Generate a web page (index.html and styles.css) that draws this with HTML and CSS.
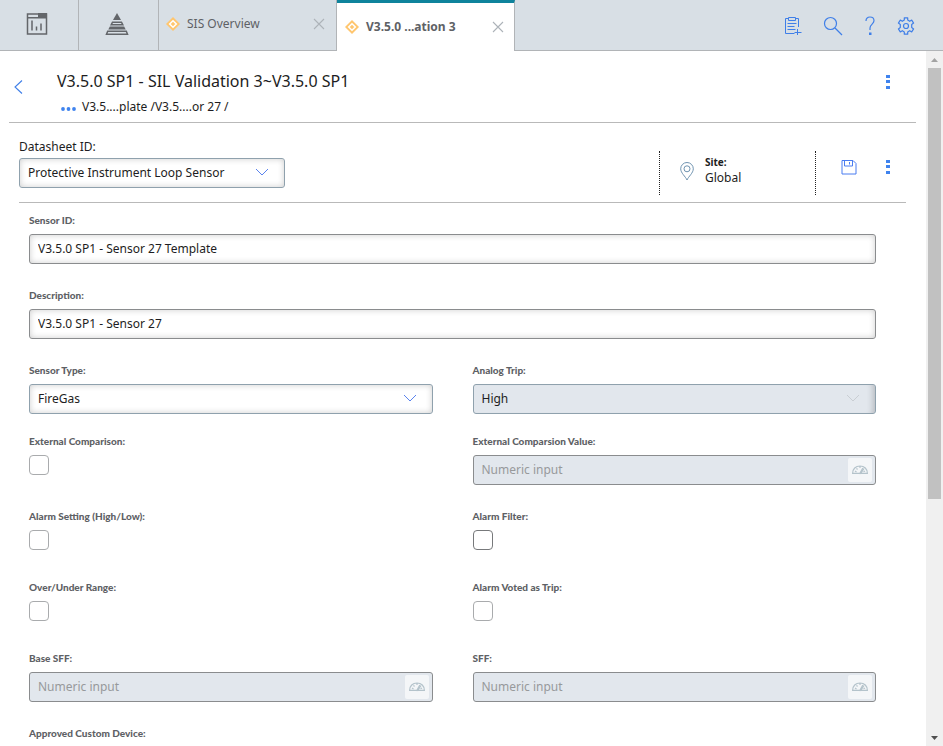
FILE: index.html
```html
<!DOCTYPE html>
<html lang="en">
<head>
<meta charset="utf-8">
<title>SIS Datasheet</title>
<link rel="stylesheet" href="styles.css">
</head>
<body>
<svg class="defs" width="0" height="0" aria-hidden="true">
  <symbol id="diamond" viewBox="0 0 14 14"><path fill="#ffc66e" d="M7 0l7 7-7 7-7-7z"/><path fill="none" stroke="#fff" stroke-width="1.5" d="M7 3.7L10.300 7 7 10.300 3.700 7z"/></symbol>
  <symbol id="close" viewBox="0 0 12 12"><path fill="none" stroke="currentColor" stroke-width="1.1" d="M1 1l10 10M11 1L1 11"/></symbol>
  <symbol id="chevron" viewBox="0 0 14 8"><path fill="none" stroke="currentColor" d="M1 1l6 6 6-6"/></symbol>
  <symbol id="more" viewBox="0 0 4 16"><path fill="#3f83ee" d="M0 1h4v3H0zM0 6h4v3H0zM0 12h4v3H0z"/></symbol>
  <symbol id="gauge" viewBox="0 0 16 10"><path fill="none" stroke="#b4c3cb" stroke-width="1.2" d="M.6 8.400C.6 4 3.700 1 8 1s7.400 3 7.400 7.400zM3 6l1.500 1M4.500 3.300l1 1.200M8 1.500V3M13 6l-1.500.8M10.800 3L7.500 9M12 3.500L8.500 9"/></symbol>
</svg>

<header class="topbar">
  <nav class="tabs" aria-label="Open pages">
    <a class="tab tab-icon" href="#dashboard" aria-label="Dashboard">
      <svg width="22" height="22" viewBox="0 0 22 22"><path fill="none" stroke="#63666a" stroke-width="1.500" d="M1.500 1h19v20h-19z"/><path fill="#63666a" d="M12 0h9v5h-9zM1 4h20v1.500H1z"/><path stroke="#63666a" stroke-width="1.500" d="M6 7.500v10M10.500 13.500v4M15 10.500v7"/></svg>
    </a>
    <a class="tab tab-icon" href="#hierarchy" aria-label="Hierarchy">
      <svg width="24" height="22" viewBox="0 0 24 22"><path fill="#63666a" d="M12 0l4 7H8z"/><path fill="none" stroke="#63666a" stroke-width="1.500" d="M7.500 9.200h9l1.300 2.600H6.200zM5.300 14.200h13.400l.8 1.600H4.500zM2.700 18.200h18.600l1.200 3h-21z"/></svg>
    </a>
    <div class="tab">
      <svg width="14" height="14"><use href="#diamond"/></svg>
      <a class="tab-name" href="#overview">SIS Overview</a>
      <button class="icon-btn close" aria-label="Close SIS Overview"><svg width="12" height="12"><use href="#close"/></svg></button>
    </div>
    <div class="tab active">
      <svg width="14" height="14"><use href="#diamond"/></svg>
      <a class="tab-name" href="#validation" aria-current="page">V3.5.0 ...ation 3</a>
      <button class="icon-btn close" aria-label="Close V3.5.0 validation"><svg width="12" height="12"><use href="#close"/></svg></button>
    </div>
  </nav>
  <div class="tools">
    <button class="icon-btn" aria-label="New record"><svg width="18" height="20" viewBox="0 0 18 20"><g fill="none" stroke="#3f7fe8"><path d="M4 2.500H1.500v15h9M12 2.500h2.500V11M4.500 1.500h7v3h-7zM3.500 7.500h9M3.500 10.500h7M3.500 13.500h8M10.500 16.500h7M13.500 13v6"/></g></svg></button>
    <button class="icon-btn" aria-label="Search"><svg width="20" height="20" viewBox="0 0 20 20"><g fill="none" stroke="#3f7fe8" stroke-width="1.200"><circle cx="7.500" cy="7.500" r="6"/><path d="M12 12l7 7"/></g></svg></button>
    <button class="icon-btn" aria-label="Help"><svg width="12" height="20" viewBox="0 0 12 20"><path fill="none" stroke="#3f7fe8" stroke-width="1.200" d="M2 5c0-2.500 1.500-4 4-4s4 1.500 4 3.800c0 3-4 3.700-4 7.200v2"/><path fill="#3f7fe8" d="M5 16.500h2.500V19H5z"/></svg></button>
    <button class="icon-btn" aria-label="Settings"><svg width="18" height="18" viewBox="0 0 18 18"><g fill="none" stroke="#3f7fe8" stroke-width="1.200" stroke-linejoin="round"><circle cx="9" cy="9" r="2.500"/><path d="M7.300.8h3.400v2.300l2 1.200 2-1.200 1.900 3-1.900 1.300v3.200l1.900 1.300-1.900 3-2-1.200-2 1.200v2.300H7.300v-2.300l-2-1.200-2 1.200-1.900-3 1.900-1.300V7.400L1.400 6.100l1.900-3 2 1.200 2-1.200z"/></g></svg></button>
  </div>
</header>

<div class="workspace">
  <main class="page">
    <section class="record-head">
      <button class="icon-btn back" aria-label="Back"><svg width="9" height="14" viewBox="0 0 9 14"><path fill="none" stroke="#3f7fe8" stroke-width="1.100" d="M8 .5L1 7l7 6.500"/></svg></button>
      <div class="record-text">
        <h1>V3.5.0 SP1 - SIL Validation 3~V3.5.0 SP1</h1>
        <nav class="crumbs" aria-label="Breadcrumb">
          <button class="icon-btn" aria-label="Show full path"><svg width="15" height="4" viewBox="0 0 15 4"><g fill="#3f83ee"><circle cx="2" cy="2" r="1.900"/><circle cx="7.500" cy="2" r="1.900"/><circle cx="13" cy="2" r="1.900"/></g></svg></button>
          <span><a href="#template">V3.5....plate</a> /<a href="#sensor">V3.5....or 27</a> /</span>
        </nav>
      </div>
      <button class="icon-btn more" aria-label="Record actions"><svg width="4" height="16"><use href="#more"/></svg></button>
    </section>

    <section class="sheet-bar">
      <div class="sheet-pick">
        <label for="sheet">Datasheet ID:</label>
        <div class="select">
          <select id="sheet"><option>Protective Instrument Loop Sensor</option></select>
          <svg width="14" height="8"><use href="#chevron"/></svg>
        </div>
      </div>
      <div class="site">
        <svg width="14" height="19" viewBox="0 0 14 19"><g fill="none" stroke="#6f93b0"><path d="M7 18C5.500 14.500.7 11 .7 6.800a6.300 6.300 0 0 1 12.600 0C13.300 11 8.500 14.500 7 18z"/><circle cx="7" cy="6.800" r="3"/></g></svg>
        <div><strong>Site:</strong><span>Global</span></div>
      </div>
      <div class="sheet-actions">
        <button class="icon-btn" aria-label="Save"><svg width="16" height="16" viewBox="0 0 16 16"><path fill="none" stroke="#4a7cf0" d="M1 1.500h11l3 3V15H1zM3.500 1.500V7h8V1.500M8.500 3v2.500"/></svg></button>
        <button class="icon-btn" aria-label="Datasheet actions"><svg width="4" height="16"><use href="#more"/></svg></button>
      </div>
    </section>

    <form class="form">
      <div class="field wide"><label for="sid">Sensor ID:</label><input class="box" id="sid" type="text" value="V3.5.0 SP1 - Sensor 27 Template"></div>
      <div class="field wide"><label for="desc">Description:</label><input class="box" id="desc" type="text" value="V3.5.0 SP1 - Sensor 27"></div>

      <div class="field short"><label for="type">Sensor Type:</label>
        <div class="select"><select id="type"><option>FireGas</option></select><svg width="14" height="8"><use href="#chevron"/></svg></div></div>
      <div class="field short"><label for="trip">Analog Trip:</label>
        <div class="select off"><select id="trip" disabled><option>High</option></select><svg width="14" height="8"><use href="#chevron"/></svg></div></div>

      <div class="field"><label for="cmp">External Comparison:</label><input class="check" id="cmp" type="checkbox"></div>
      <div class="field"><label for="cmpv">External Comparsion Value:</label>
        <div class="numeric"><input class="box" id="cmpv" type="text" placeholder="Numeric input" disabled><span class="unit"><svg width="16" height="10"><use href="#gauge"/></svg></span></div></div>

      <div class="field short"><label for="alarm">Alarm Setting (High/Low):</label><input class="check" id="alarm" type="checkbox"></div>
      <div class="field short"><label for="filter">Alarm Filter:</label><input class="check strong" id="filter" type="checkbox"></div>

      <div class="field short"><label for="range">Over/Under Range:</label><input class="check" id="range" type="checkbox"></div>
      <div class="field short"><label for="voted">Alarm Voted as Trip:</label><input class="check" id="voted" type="checkbox"></div>

      <div class="field"><label for="bsff">Base SFF:</label>
        <div class="numeric"><input class="box" id="bsff" type="text" placeholder="Numeric input" disabled><span class="unit"><svg width="16" height="10"><use href="#gauge"/></svg></span></div></div>
      <div class="field"><label for="sff">SFF:</label>
        <div class="numeric"><input class="box" id="sff" type="text" placeholder="Numeric input" disabled><span class="unit"><svg width="16" height="10"><use href="#gauge"/></svg></span></div></div>

      <div class="field"><label for="custom">Approved Custom Device:</label><input class="check" id="custom" type="checkbox"></div>
    </form>
  </main>
  <div class="scrollbar" aria-hidden="true">
    <svg width="17" height="17" viewBox="0 0 17 17"><path fill="#a3a3a3" d="M5 11h7L8.500 7z"/></svg>
    <div class="thumb"></div>
    <div class="rest"></div>
    <svg width="17" height="17" viewBox="0 0 17 17"><path fill="#505050" d="M5 7h7l-3.500 4z"/></svg>
  </div>
</div>
</body>
</html>
```
FILE: styles.css
```css
* { box-sizing: border-box; }

body {
  margin: 0;
  height: 100vh;
  display: flex;
  flex-direction: column;
  overflow: hidden;
  background: #fff;
  color: #1d1d22;
  font: 12px/16px "Noto Sans", sans-serif;
}

svg { display: block; flex: none; }
.defs { position: absolute; }
a { color: inherit; text-decoration: none; }
input, select, button { font: inherit; color: inherit; margin: 0; }
.icon-btn { display: block; flex: none; padding: 0; border: 0; background: none; }

/* Top bar */
.topbar {
  flex: none;
  display: flex;
  justify-content: space-between;
  height: 51px;
  background: #d8dfe5;
  box-shadow: inset 0 -1px #b1b4b7;
}
.tabs { display: flex; }
.tab {
  display: flex;
  align-items: center;
  gap: 7px;
  width: 178px;
  padding: 0 11px 3px 7px;
  border-right: 1px solid #b1b4b7;
  color: #5e6165;
}
.tab-icon { width: 79px; justify-content: center; padding: 0 5px 3px 0; }
.tab-icon + .tab-icon { width: 80px; padding: 0 4px 3px 0; }
.tab-name { flex: 1; }
.close { color: #adb3b9; }
.active {
  padding: 0 10px 0 8px;
  border-top: 3px solid #0f839c;
  background: #fff;
  font-weight: bold;
}
.tools { display: flex; align-items: center; gap: 21px; padding-right: 28px; }

/* Workspace */
.workspace { flex: 1; min-height: 0; display: flex; }
.page { flex: 1; min-width: 0; overflow: hidden; padding: 0 10px 0 9px; }

.record-head {
  display: flex;
  align-items: flex-start;
  height: 72px;
  padding: 18px 26px 0 5px;
  border-bottom: 1px solid #b9b9b9;
}
.back { padding-top: 11px; }
.record-text { flex: 1; padding-left: 34px; }
h1 { margin: 0; font-size: 16px; line-height: 24px; font-weight: normal; }
.crumbs { display: flex; align-items: center; gap: 6px; padding: 6px 0 0 4px; }
.crumbs .icon-btn { padding-top: 4px; }
.more { padding-top: 5px; }

.sheet-bar {
  display: flex;
  height: 80px;
  margin: 0 10px;
  padding-top: 16px;
  border-bottom: 1px solid #b9b9b9;
}
.sheet-pick { flex: 1; }
.sheet-pick label { display: block; margin-bottom: 3px; }
.sheet-pick .select { width: 266px; }
.site {
  display: flex;
  gap: 11px;
  width: 157px;
  height: 44px;
  margin-top: 12px;
  padding: 4px 0 0 20px;
  border: dotted #222;
  border-width: 0 1px;
}
.site svg { margin-top: 7px; }
.site strong { display: block; font-size: 10px; line-height: 15px; }
.sheet-actions { display: flex; align-items: flex-start; gap: 29px; padding: 20px 16px 0 25px; }

/* Controls */
.box, .select select {
  display: block;
  width: 100%;
  height: 30px;
  padding: 0 8px;
  border: 1px solid #8a8c8e;
  border-radius: 3px;
  background: #fff;
  box-shadow: inset 0 0 6px rgba(0, 0, 0, 0.2);
  color: #1d1d22;
  opacity: 1;
}
.box { padding-bottom: 2px; }
.box:disabled { background: #e2e7ed; box-shadow: none; }
.box::placeholder { color: #97999b; opacity: 1; }
.select { position: relative; }
.select select { appearance: none; border-color: #8fa1ad; }
.select svg { position: absolute; right: 16px; top: 10px; color: #5a83ee; pointer-events: none; }
.select.off select { background: #e2e7ed; box-shadow: inset -7px 0 6px -5px rgba(0, 0, 0, 0.2); }
.select.off svg { color: #c9ced3; }
.numeric { position: relative; }
.unit {
  position: absolute;
  right: 4px;
  top: 3px;
  display: grid;
  place-items: center;
  width: 24px;
  height: 24px;
  border-radius: 2px;
  background: #f4f6f8;
}
.check {
  appearance: none;
  display: block;
  width: 20px;
  height: 20px;
  border: 1px solid #a9abad;
  border-radius: 4px;
  background: #fff;
}
.check.strong { border-color: #77797b; }

/* Form */
.form {
  display: grid;
  grid-template-columns: 1fr 1fr;
  column-gap: 40px;
  padding: 9px 40px 0 20px;
}
.wide { grid-column: 1 / -1; }
.field { height: 75px; }
.field.short { height: 71px; }
.field label {
  display: block;
  margin-bottom: 6px;
  color: #5e6165;
  font: 900 10px/16px Lato, "Noto Sans", sans-serif;
}

/* Scrollbar */
.scrollbar { flex: none; display: flex; flex-direction: column; width: 17px; background: #f0f0f0; }
.thumb { flex: 431; margin: 0 2px; background: #c1c1c1; }
.rest { flex: 230; }
```
